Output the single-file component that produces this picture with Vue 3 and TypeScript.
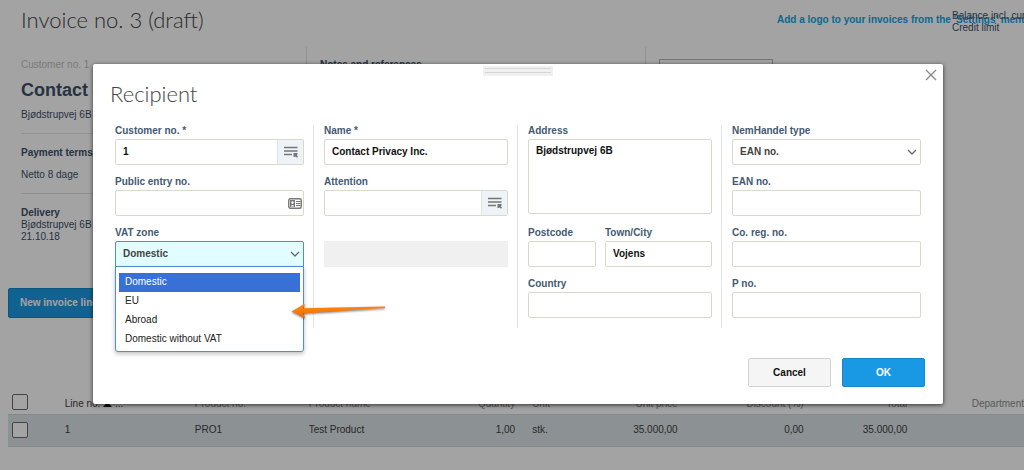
<script setup lang="ts">
import { ref } from 'vue'

interface InvoiceLine {
  line: string
  productNo: string
  productName: string
  quantity: string
  unit: string
  unitPrice: string
  discount: string
  total: string
}

const lines: InvoiceLine[] = [
  {
    line: '1',
    productNo: 'PRO1',
    productName: 'Test Product',
    quantity: '1,00',
    unit: 'stk.',
    unitPrice: '35.000,00',
    discount: '0,00',
    total: '35.000,00',
  },
]

const vatZones: string[] = ['Domestic', 'EU', 'Abroad', 'Domestic without VAT']
const vatZone = ref<string>('Domestic')
const vatOpen = ref<boolean>(true)

const customerNo = ref<string>('1')
const customerName = ref<string>('Contact Privacy Inc.')
const address = ref<string>('Bjødstrupvej 6B')
const town = ref<string>('Vojens')

function pickZone(zone: string): void {
  vatZone.value = zone
  vatOpen.value = false
}
</script>

<template>
  <div class="page">
    <main class="invoice">
      <header class="top">
        <h1 class="title">Invoice no. 3 (draft)</h1>
        <a class="logo-link" href="#">Add a logo to your invoices from the 'Settings' menu</a>
        <div class="balance">Balance incl. current<br />Credit limit</div>
      </header>

      <div class="summary">
        <section class="customer">
          <div class="muted">Customer no. 1</div>
          <h2 class="name">Contact Privacy Inc.</h2>
          <div class="street">Bjødstrupvej 6B</div>
          <div class="block terms">
            <strong>Payment terms</strong>
            <span>Netto 8 dage</span>
          </div>
          <div class="block">
            <strong>Delivery</strong><br />Bjødstrupvej 6B<br />21.10.18
          </div>
        </section>
        <section class="notes"><strong>Notes and references</strong></section>
        <section class="extra"><div class="logo-box"></div></section>
      </div>

      <button class="new-line" type="button">New invoice line</button>

      <div class="table-wrap">
        <table class="lines">
          <colgroup>
            <col class="c-check" /><col class="c-line" /><col class="c-no" /><col class="c-name" />
            <col class="c-qty" /><col class="c-unit" /><col class="c-disc" /><col class="c-total" /><col />
          </colgroup>
          <thead>
            <tr>
              <th><input type="checkbox" aria-label="Select all lines" /></th>
              <th class="sorted">
                Line no.
                <svg class="sort" viewBox="0 0 9 5" aria-hidden="true"><path d="M0 5 4.5 0 9 5Z" /></svg>
                ...
              </th>
              <th>Product no.</th>
              <th>Product name</th>
              <th class="num">Quantity</th>
              <th class="split"><span>Unit</span><span>Unit price</span></th>
              <th class="num">Discount (%)</th>
              <th class="num">Total</th>
              <th class="num last">Department</th>
            </tr>
          </thead>
          <tbody>
            <tr v-for="row in lines" :key="row.line">
              <td><input type="checkbox" :aria-label="'Select line ' + row.line" /></td>
              <td>{{ row.line }}</td>
              <td>{{ row.productNo }}</td>
              <td>{{ row.productName }}</td>
              <td class="num">{{ row.quantity }}</td>
              <td class="split"><span>{{ row.unit }}</span><span>{{ row.unitPrice }}</span></td>
              <td class="num">{{ row.discount }}</td>
              <td class="num">{{ row.total }}</td>
              <td></td>
            </tr>
          </tbody>
        </table>
      </div>
    </main>

    <div class="overlay">
      <form class="modal" role="dialog" aria-labelledby="dialog-title" @submit.prevent>
        <div class="grip"></div>
        <button class="close" type="button" aria-label="Close">
          <svg viewBox="0 0 12 12" aria-hidden="true"><path d="M1 1 11 11M11 1 1 11" /></svg>
        </button>
        <h2 id="dialog-title" class="title">Recipient</h2>

        <div class="columns">
          <div class="column">
            <div class="field">
              <label for="customer-no">Customer no. *</label>
              <div class="group">
                <input id="customer-no" v-model="customerNo" type="text" />
                <button class="addon" type="button" aria-label="Choose customer">
                  <svg viewBox="0 0 14 12" aria-hidden="true">
                    <path class="bars" d="M0 1.5H13.5M0 5H13.5M0 8.5H8" />
                    <path d="M9.5 7H13.5V8.5L12.8 9.3 14 10.7 13 11.7 11.6 10.5 11 11H9.5Z" />
                  </svg>
                </button>
              </div>
            </div>
            <div class="field">
              <label for="public-no">Public entry no.</label>
              <div class="group">
                <input id="public-no" type="text" />
                <svg class="card" viewBox="0 0 14 11" aria-hidden="true">
                  <rect class="frame" x="0.75" y="0.75" width="12.5" height="9.5" rx="1.5" />
                  <path d="M2 2H7V9H2Z" />
                  <path class="person" d="M3 8.5C3 6.5 6 6.5 6 8.5ZM4.5 3.2A1.2 1.4 0 1 1 4.5 6 1.2 1.4 0 1 1 4.5 3.2Z" />
                  <path class="rows" d="M8 3.5H12.5M8 5.5H12.5M8 7.5H12.5" />
                </svg>
              </div>
            </div>
            <div class="field">
              <label for="vat-zone">VAT zone</label>
              <div class="group active">
                <select id="vat-zone" v-model="vatZone" @mousedown.prevent="vatOpen = !vatOpen">
                  <option v-for="zone in vatZones" :key="zone">{{ zone }}</option>
                </select>
                <svg class="chevron" viewBox="0 0 10 6" aria-hidden="true"><path d="M1 1 5 5 9 1" /></svg>
                <ul v-if="vatOpen" class="options" role="listbox" aria-label="VAT zone">
                  <li
                    v-for="zone in vatZones"
                    :key="zone"
                    role="option"
                    :aria-selected="zone === vatZone"
                    :class="{ selected: zone === vatZone }"
                    @click="pickZone(zone)"
                  >{{ zone }}</li>
                </ul>
              </div>
            </div>
          </div>

          <div class="column">
            <div class="field">
              <label for="name">Name *</label>
              <div class="group"><input id="name" v-model="customerName" type="text" /></div>
            </div>
            <div class="field">
              <label for="attention">Attention</label>
              <div class="group">
                <input id="attention" type="text" />
                <button class="addon" type="button" aria-label="Choose contact">
                  <svg viewBox="0 0 14 12" aria-hidden="true">
                    <path class="bars" d="M0 1.5H13.5M0 5H13.5M0 8.5H8" />
                    <path d="M9.5 7H13.5V8.5L12.8 9.3 14 10.7 13 11.7 11.6 10.5 11 11H9.5Z" />
                  </svg>
                </button>
              </div>
            </div>
            <div class="field blank"><div class="disabled"></div></div>
          </div>

          <div class="column">
            <div class="field tall">
              <label for="address">Address</label>
              <textarea id="address" v-model="address"></textarea>
            </div>
            <div class="pair">
              <div class="field">
                <label for="postcode">Postcode</label>
                <div class="group"><input id="postcode" type="text" /></div>
              </div>
              <div class="field">
                <label for="town">Town/City</label>
                <div class="group"><input id="town" v-model="town" type="text" /></div>
              </div>
            </div>
            <div class="field">
              <label for="country">Country</label>
              <div class="group"><input id="country" type="text" /></div>
            </div>
          </div>

          <div class="column">
            <div class="field">
              <label for="nem-type">NemHandel type</label>
              <div class="group">
                <select id="nem-type"><option>EAN no.</option></select>
                <svg class="chevron" viewBox="0 0 10 6" aria-hidden="true"><path d="M1 1 5 5 9 1" /></svg>
              </div>
            </div>
            <div class="field">
              <label for="ean">EAN no.</label>
              <div class="group"><input id="ean" type="text" /></div>
            </div>
            <div class="field">
              <label for="reg">Co. reg. no.</label>
              <div class="group"><input id="reg" type="text" /></div>
            </div>
            <div class="field">
              <label for="p-no">P no.</label>
              <div class="group"><input id="p-no" type="text" /></div>
            </div>
          </div>
        </div>

        <div class="actions">
          <button class="cancel" type="button">Cancel</button>
          <button class="ok" type="submit">OK</button>
        </div>

        <svg class="pointer" viewBox="0 0 96 18" aria-hidden="true">
          <defs>
            <linearGradient id="pointer-fill" x1="0" y1="0" x2="0" y2="1">
              <stop offset="0" stop-color="#ff8a1a" />
              <stop offset="1" stop-color="#ee6c00" />
            </linearGradient>
          </defs>
          <path d="M0.5 8.5Q7 5 13 1Q14 1 13.6 2L12 5.2 94 3.4V5L12 10.6 14 14.2Q14 15.3 13 15Q7 11 0.5 8.5Z" />
        </svg>
      </form>
    </div>
  </div>
</template>

<style>
body {
  margin: 0;
}
</style>

<style scoped>
* {
  box-sizing: border-box;
}

.page {
  position: relative;
  min-height: 100vh;
  overflow: hidden;
  background: #fff;
  color: #3b5068;
  font: 10px/12px 'Liberation Sans', Arial, sans-serif;
}

button,
input,
select,
textarea {
  font: inherit;
  margin: 0;
}

.title {
  margin: 0;
  font: 300 22px/28px Lato, 'Open Sans', sans-serif;
  color: #444;
}

.top {
  display: grid;
  grid-template-columns: 1fr 175px 72px;
  align-items: start;
  height: 47px;
  padding: 6px 0 0 21px;
  white-space: nowrap;
}

.logo-link {
  padding-top: 8px;
  color: #10a5e0;
  font-weight: bold;
  text-decoration: none;
}

.balance {
  padding-top: 4px;
}

.summary {
  display: grid;
  grid-template-columns: 285fr 339fr 379fr;
  height: 224px;
  margin-left: 21px;
}

.summary section {
  padding-top: 12px;
}

.notes,
.extra {
  padding-left: 13px;
  border-left: 1px solid #e3e3e3;
}

.muted {
  color: #c0c0c0;
}

.name {
  margin: 8px 0;
  font-size: 18px;
  line-height: 22px;
  white-space: nowrap;
}

.block {
  margin-top: 12px;
  padding-top: 13px;
  border-top: 1px solid #e3e3e3;
}

.terms {
  display: grid;
  gap: 10px;
}

.logo-box {
  width: 114px;
  height: 60px;
  border: 1px solid #b4b4b4;
}

.new-line {
  display: block;
  height: 30px;
  margin: 17px 0 0 8px;
  padding: 0 11px;
  border: 1px solid #1387c9;
  border-radius: 2px;
  background: #1999e3;
  color: #fff;
  font-weight: bold;
}

.table-wrap {
  margin: 74px 0 0 8px;
  padding-bottom: 23px;
  border-bottom: 1px solid #eee;
}

.lines {
  width: 100%;
  table-layout: fixed;
  border-collapse: collapse;
  color: #404040;
}

.c-check { width: 5%; }
.c-line { width: 12.8%; }
.c-no { width: 11.2%; }
.c-name { width: 12.5%; }
.c-qty { width: 9.5%; }
.c-unit { width: 16%; }
.c-disc { width: 12.4%; }
.c-total { width: 10.2%; }

th,
td {
  padding: 0 11px 0 6px;
  font-weight: normal;
  text-align: left;
  white-space: nowrap;
}

th {
  height: 22px;
  padding-top: 3px;
  color: #8c8c8c;
}

th.sorted {
  color: #404040;
}

td {
  height: 32px;
  border-top: 1px solid #d2d8dc;
  border-bottom: 1px solid #d2d8dc;
  background: #dce3e7;
}

.num {
  text-align: right;
}

.last {
  padding-right: 0;
}

.split span + span {
  float: right;
}

.sort {
  width: 9px;
  height: 5px;
  fill: #111;
}

.lines input {
  display: block;
  appearance: none;
  width: 16px;
  height: 16px;
  border: 1px solid #6a6a6a;
  border-radius: 2px;
  background: #fff;
}

th:first-child,
td:first-child {
  padding: 0 0 0 4px;
}

th:first-child {
  padding-bottom: 2px;
}

.overlay {
  position: absolute;
  inset: 0;
  padding: 64px 81px 0 93px;
  background: rgba(0, 0, 0, 0.36);
}

.modal {
  position: relative;
  padding: 16px 22px 17px;
  border-radius: 2px;
  background: #fff;
  box-shadow: 0 1px 4px rgba(0, 0, 0, 0.7);
}

.modal .title {
  margin: 0 0 17px -5px;
}

.grip {
  position: absolute;
  top: 2px;
  left: 50%;
  width: 70px;
  height: 10px;
  margin-left: -35px;
  border: solid #f0f0f0;
  border-width: 2px;
  background: linear-gradient(#d6d6d6 1px, #f0f0f0 1px 4px, #d6d6d6 4px 5px, #f0f0f0 5px);
}

.close {
  position: absolute;
  top: 5px;
  right: 6px;
  width: 12px;
  height: 12px;
  padding: 0;
  border: 0;
  background: none;
}

.close svg {
  display: block;
  fill: none;
  stroke: #8c8c8c;
  stroke-width: 1.4;
}

.columns {
  display: grid;
  grid-template-columns: 199fr 204fr 204fr 199fr;
}

.column {
  display: grid;
  grid-template-rows: repeat(4, 40px);
  gap: 11px;
  min-width: 0;
  padding: 0 9px 10px 10px;
  border-right: 1px solid #e4e4e4;
}

.column:first-child {
  padding-left: 0;
}

.column:last-child {
  padding-right: 0;
  border-right: 0;
}

.field {
  display: flex;
  flex-direction: column;
  gap: 2px;
  min-width: 0;
}

.field label {
  color: #435a73;
  font-weight: bold;
}

.tall {
  grid-row: span 2;
}

.blank {
  justify-content: flex-end;
}

.disabled {
  height: 26px;
  background: #f0f0f0;
}

.pair {
  display: grid;
  grid-template-columns: 68fr 107fr;
  gap: 9px;
}

.group,
textarea {
  border: 1px solid #d8dacb;
  border-radius: 2px;
  background: #fff;
}

.group {
  position: relative;
  display: flex;
  height: 26px;
}

.group input,
.group select,
textarea {
  min-width: 0;
  padding: 0 7px;
  color: #111;
  font-weight: bold;
  outline: 0;
}

.group input,
.group select {
  flex: 1;
  border: 0;
  background: none;
}

.group select {
  appearance: none;
  color: #444;
}

textarea {
  height: 75px;
  padding: 5px 7px;
  resize: none;
}

.addon {
  display: grid;
  place-items: center;
  width: 26px;
  padding: 0;
  border: 0;
  border-left: 1px solid #e0e4e4;
  background: #edf3f6;
}

.addon svg {
  width: 14px;
  height: 12px;
  fill: #777;
}

.addon .bars {
  fill: none;
  stroke: #777;
  stroke-width: 1.5;
}

.card {
  align-self: center;
  width: 14px;
  height: 11px;
  margin-right: 1px;
  fill: #777;
}

.card .frame,
.card .rows {
  fill: none;
  stroke: #777;
}

.card .frame {
  stroke-width: 1.4;
}

.card .person {
  fill: #fff;
}

.chevron {
  position: absolute;
  top: 9px;
  right: 3px;
  width: 10px;
  height: 6px;
  fill: none;
  stroke: #666;
  stroke-width: 1.3;
  pointer-events: none;
}

.group.active {
  border-color: #4a90d2;
  border-radius: 2px 2px 0 0;
  background: #e2fdff;
}

.options {
  position: absolute;
  top: 24px;
  left: -1px;
  right: -1px;
  margin: 0;
  padding: 6px 3px 2px;
  border: 1px solid #4a90d2;
  border-radius: 0 0 3px 3px;
  background: #fff;
  box-shadow: 0 2px 4px rgba(0, 0, 0, 0.25);
  color: #222;
  list-style: none;
}

.options li {
  padding: 3px 6px 4px;
}

.options .selected {
  background: #3870d8;
  color: #fff;
}

.actions {
  display: flex;
  justify-content: flex-end;
  gap: 11px;
  margin: 30px -4px 0 0;
}

.actions button {
  width: 83px;
  height: 29px;
  border: 1px solid #d2d2d2;
  border-radius: 2px;
  background: #f5f5f5;
  color: #111;
  font-weight: bold;
}

.actions .ok {
  border-color: #1689cc;
  background: #1999e3;
  color: #fff;
}

.pointer {
  position: absolute;
  top: 239px;
  left: 198px;
  width: 96px;
  height: 18px;
  fill: url(#pointer-fill);
  filter: drop-shadow(0 1px 1px rgba(0, 0, 0, 0.5));
}
</style>
